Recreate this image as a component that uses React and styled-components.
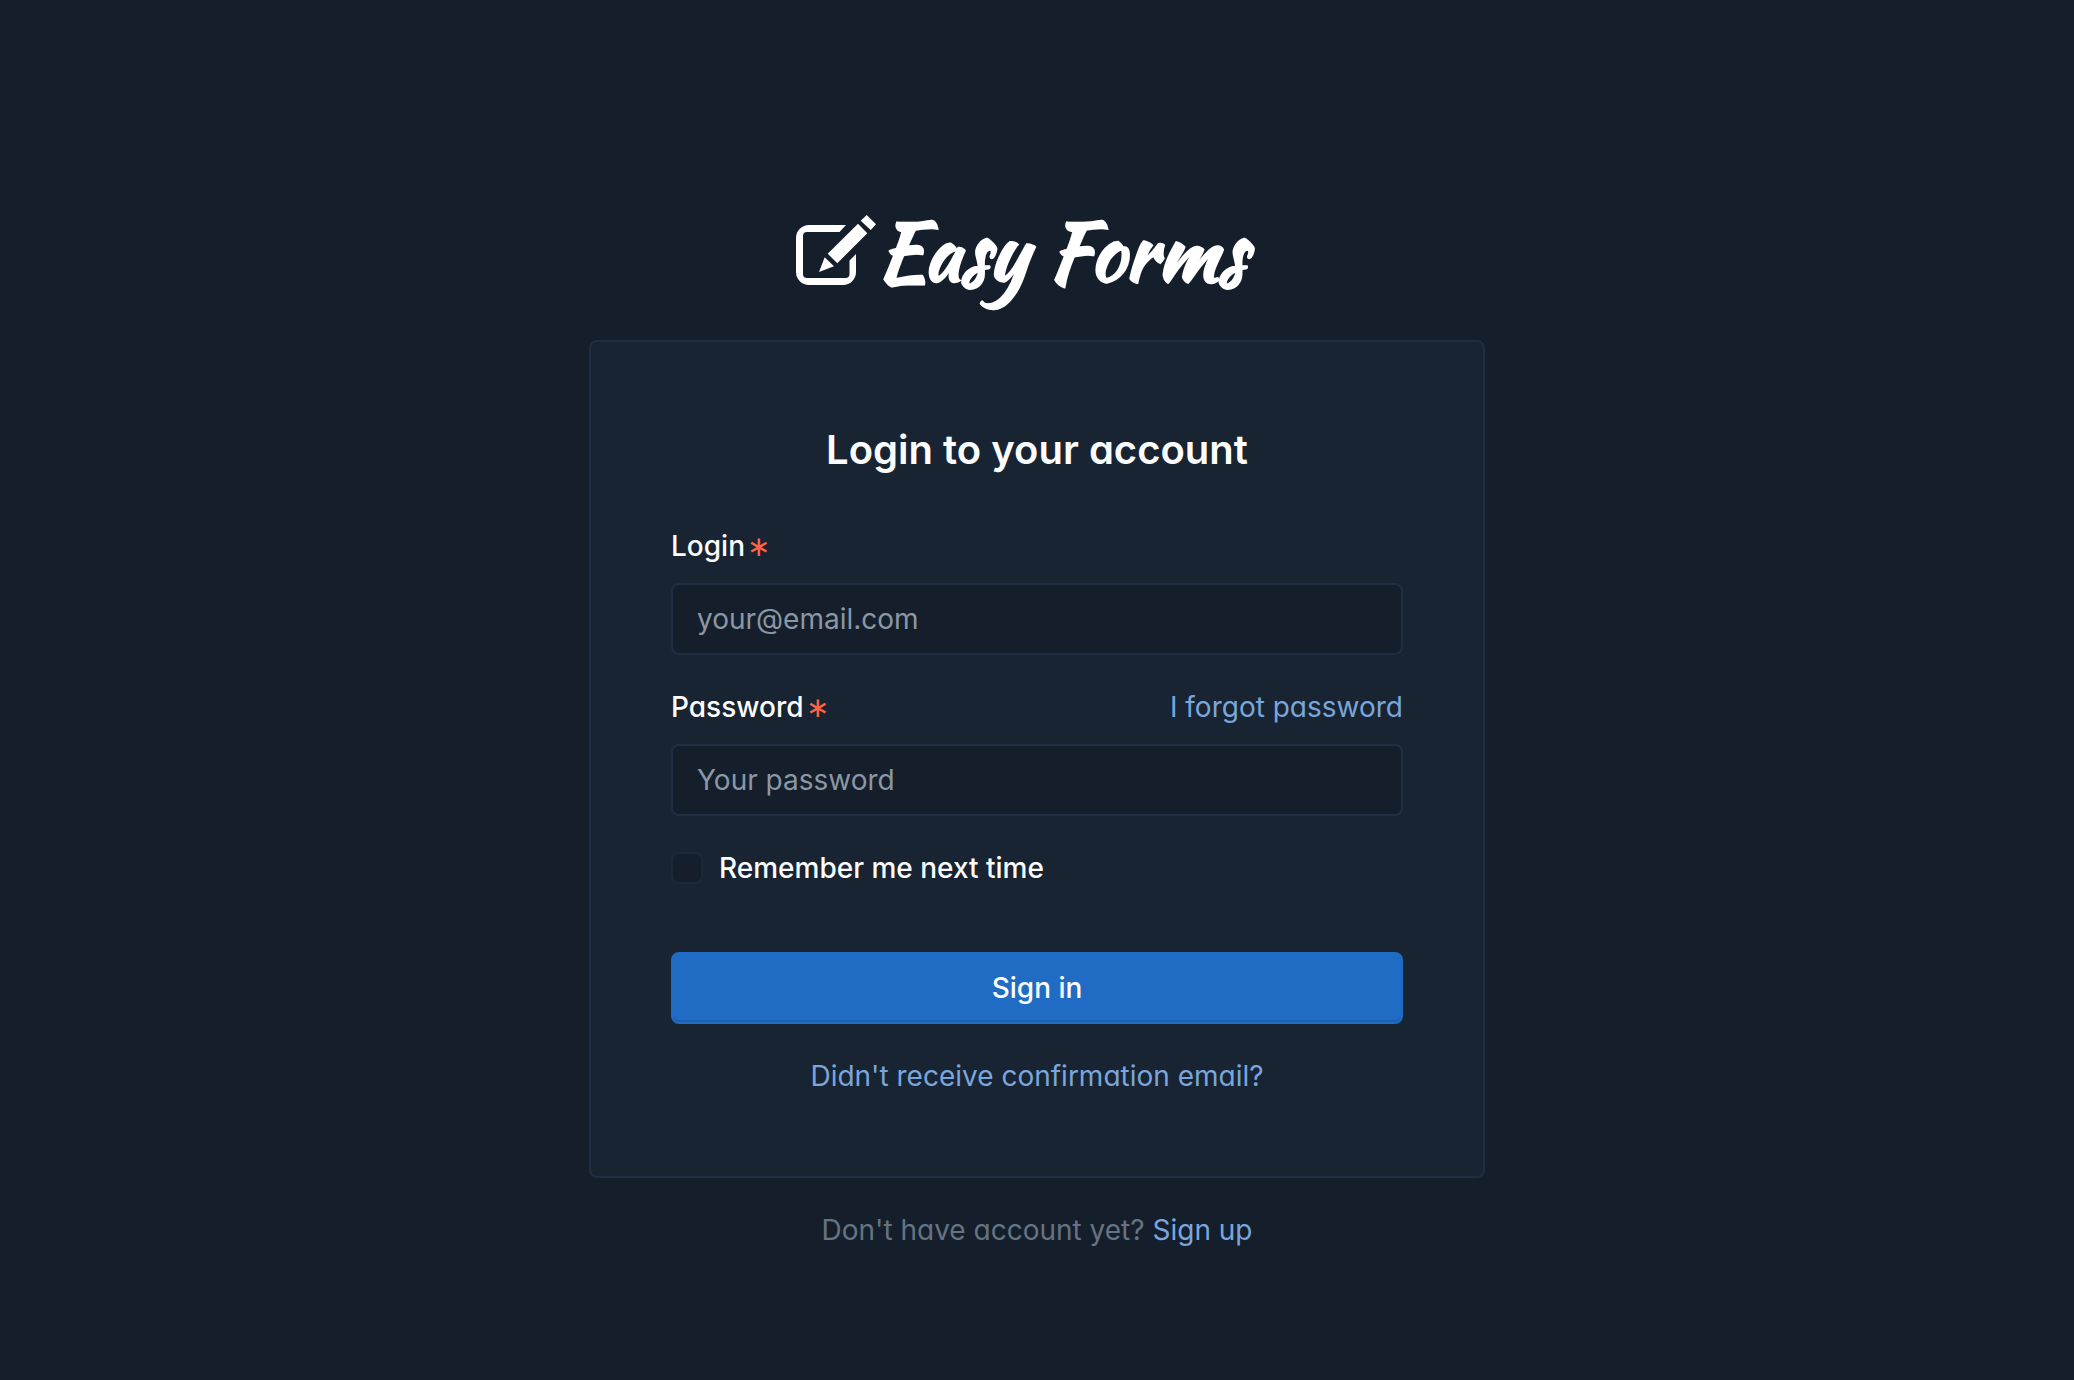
import React from "react";
import styled, { createGlobalStyle } from "styled-components";

const GlobalStyle = createGlobalStyle`
  *, *::before, *::after { box-sizing: border-box; }
  body {
    margin: 0;
    background: #151f2b;
    color: #fcfdfe;
    font-family: Inter, "Liberation Sans", sans-serif;
    font-size: 28px;
    line-height: 40px;
    font-feature-settings: "cv03", "cv04", "cv11";
    -webkit-font-smoothing: antialiased;
  }
`;

const Page = styled.main`
  min-height: 100vh;
  display: flex;
  flex-direction: column;
  align-items: center;
  justify-content: center;
  padding: 48px 32px;
`;

const Container = styled.div`
  width: 100%;
  max-width: 896px;
`;

const Brand = styled.a`
  display: flex;
  justify-content: center;
  align-items: flex-start;
  padding: 73px 32px 41px 0;
  color: #ffffff;
  text-decoration: none;
`;

const BrandMark = styled.svg`
  width: 80px;
  height: 70px;
  margin-top: 12px;
`;

const Wordmark = styled.span`
  font-family: "Kaushan Script", Lato, sans-serif;
  font-size: 80px;
  line-height: 96px;
  font-weight: 700;
  white-space: nowrap;
`;

const Card = styled.form`
  display: flex;
  flex-direction: column;
  padding: 80px;
  background: #192432;
  border: 2px solid #1f2e41;
  border-radius: 8px;
`;

const Title = styled.h1`
  margin: 0 0 48px;
  font-size: 40px;
  line-height: 56px;
  font-weight: 600;
  text-align: center;
`;

const Field = styled.div`
  display: flex;
  flex-direction: column;
  gap: 16px;
  margin-bottom: 32px;
`;

const LabelRow = styled.div`
  display: flex;
  justify-content: space-between;
  align-items: center;
  line-height: 41px;
`;

const Label = styled.label`
  font-weight: 500;
`;

const Required = styled.span`
  margin-left: 2px;
  color: #ff6347;
  font-weight: 300;
`;

const Link = styled.a`
  color: #79a6dc;
  text-decoration: none;
`;

const TextInput = styled.input`
  width: 100%;
  height: 72px;
  padding: 14px 24px;
  color: inherit;
  background: #151f2b;
  border: 2px solid #1f2e41;
  border-radius: 8px;
  font-family: inherit;
  font-size: 28px;
  line-height: 40px;

  &::placeholder {
    color: #8a97a5;
    opacity: 1;
  }
`;

const Check = styled.label`
  display: flex;
  align-items: center;
  gap: 16px;
  margin-bottom: 64px;
  font-weight: 500;
`;

const Checkbox = styled.input`
  appearance: none;
  width: 32px;
  height: 32px;
  margin: 0;
  background: #151f2b;
  border: 2px solid #1a2a38;
  border-radius: 8px;

  &:checked { background: #206bc4; }
`;

const SubmitButton = styled.button`
  height: 72px;
  padding: 0 32px;
  color: #fcfdfe;
  background: #206bc4;
  border: 2px solid #206bc4;
  border-radius: 8px;
  box-shadow: inset 0 -2px 0 rgba(24, 36, 51, 0.15);
  font-family: inherit;
  font-size: 28px;
  line-height: 40px;
  font-weight: 500;
  font-feature-settings: inherit;
`;

const Note = styled.p`
  margin: 32px 0 0;
  text-align: center;
  color: ${(props) => (props.$muted ? "#667382" : "inherit")};
`;

function BrandIcon() {
  return (
    <BrandMark viewBox="16 15 80 70" fill="currentColor" aria-hidden="true">
      <path d="M66 25 H29 A13 13 0 0 0 16 38 V72 A13 13 0 0 0 29 85 H63 A13 13 0 0 0 76 72 V54 L69.500 60.500 V74 A4 4 0 0 1 65.500 78 H27 A4 4 0 0 1 23 74 V36 A4 4 0 0 1 27 32 H59.500 Z" />
      <path d="M86.700 15 L96 24.300 L90.700 30 L80.700 20.700 Z" />
      <path d="M78 23.700 L87.300 33.300 L57.300 63.300 L47.700 53.700 Z" />
      <path d="M44.700 57.300 L54 66.300 L39 72 Z" />
    </BrandMark>
  );
}

export default function App() {
  return (
    <>
      <GlobalStyle />
      <Page>
        <Container>
          <Brand href="#">
            <BrandIcon />
            <Wordmark>Easy Forms</Wordmark>
          </Brand>
          <Card>
            <Title>Login to your account</Title>
            <Field>
              <LabelRow>
                <Label htmlFor="login">
                  Login<Required>∗</Required>
                </Label>
              </LabelRow>
              <TextInput id="login" type="text" placeholder="your@email.com" />
            </Field>
            <Field>
              <LabelRow>
                <Label htmlFor="password">
                  Password<Required>∗</Required>
                </Label>
                <Link href="#">I forgot password</Link>
              </LabelRow>
              <TextInput id="password" type="password" placeholder="Your password" />
            </Field>
            <Check>
              <Checkbox type="checkbox" />
              Remember me next time
            </Check>
            <SubmitButton type="submit">Sign in</SubmitButton>
            <Note>
              <Link href="#">Didn't receive confirmation email?</Link>
            </Note>
          </Card>
          <Note $muted>
            Don't have account yet? <Link href="#">Sign up</Link>
          </Note>
        </Container>
      </Page>
    </>
  );
}
